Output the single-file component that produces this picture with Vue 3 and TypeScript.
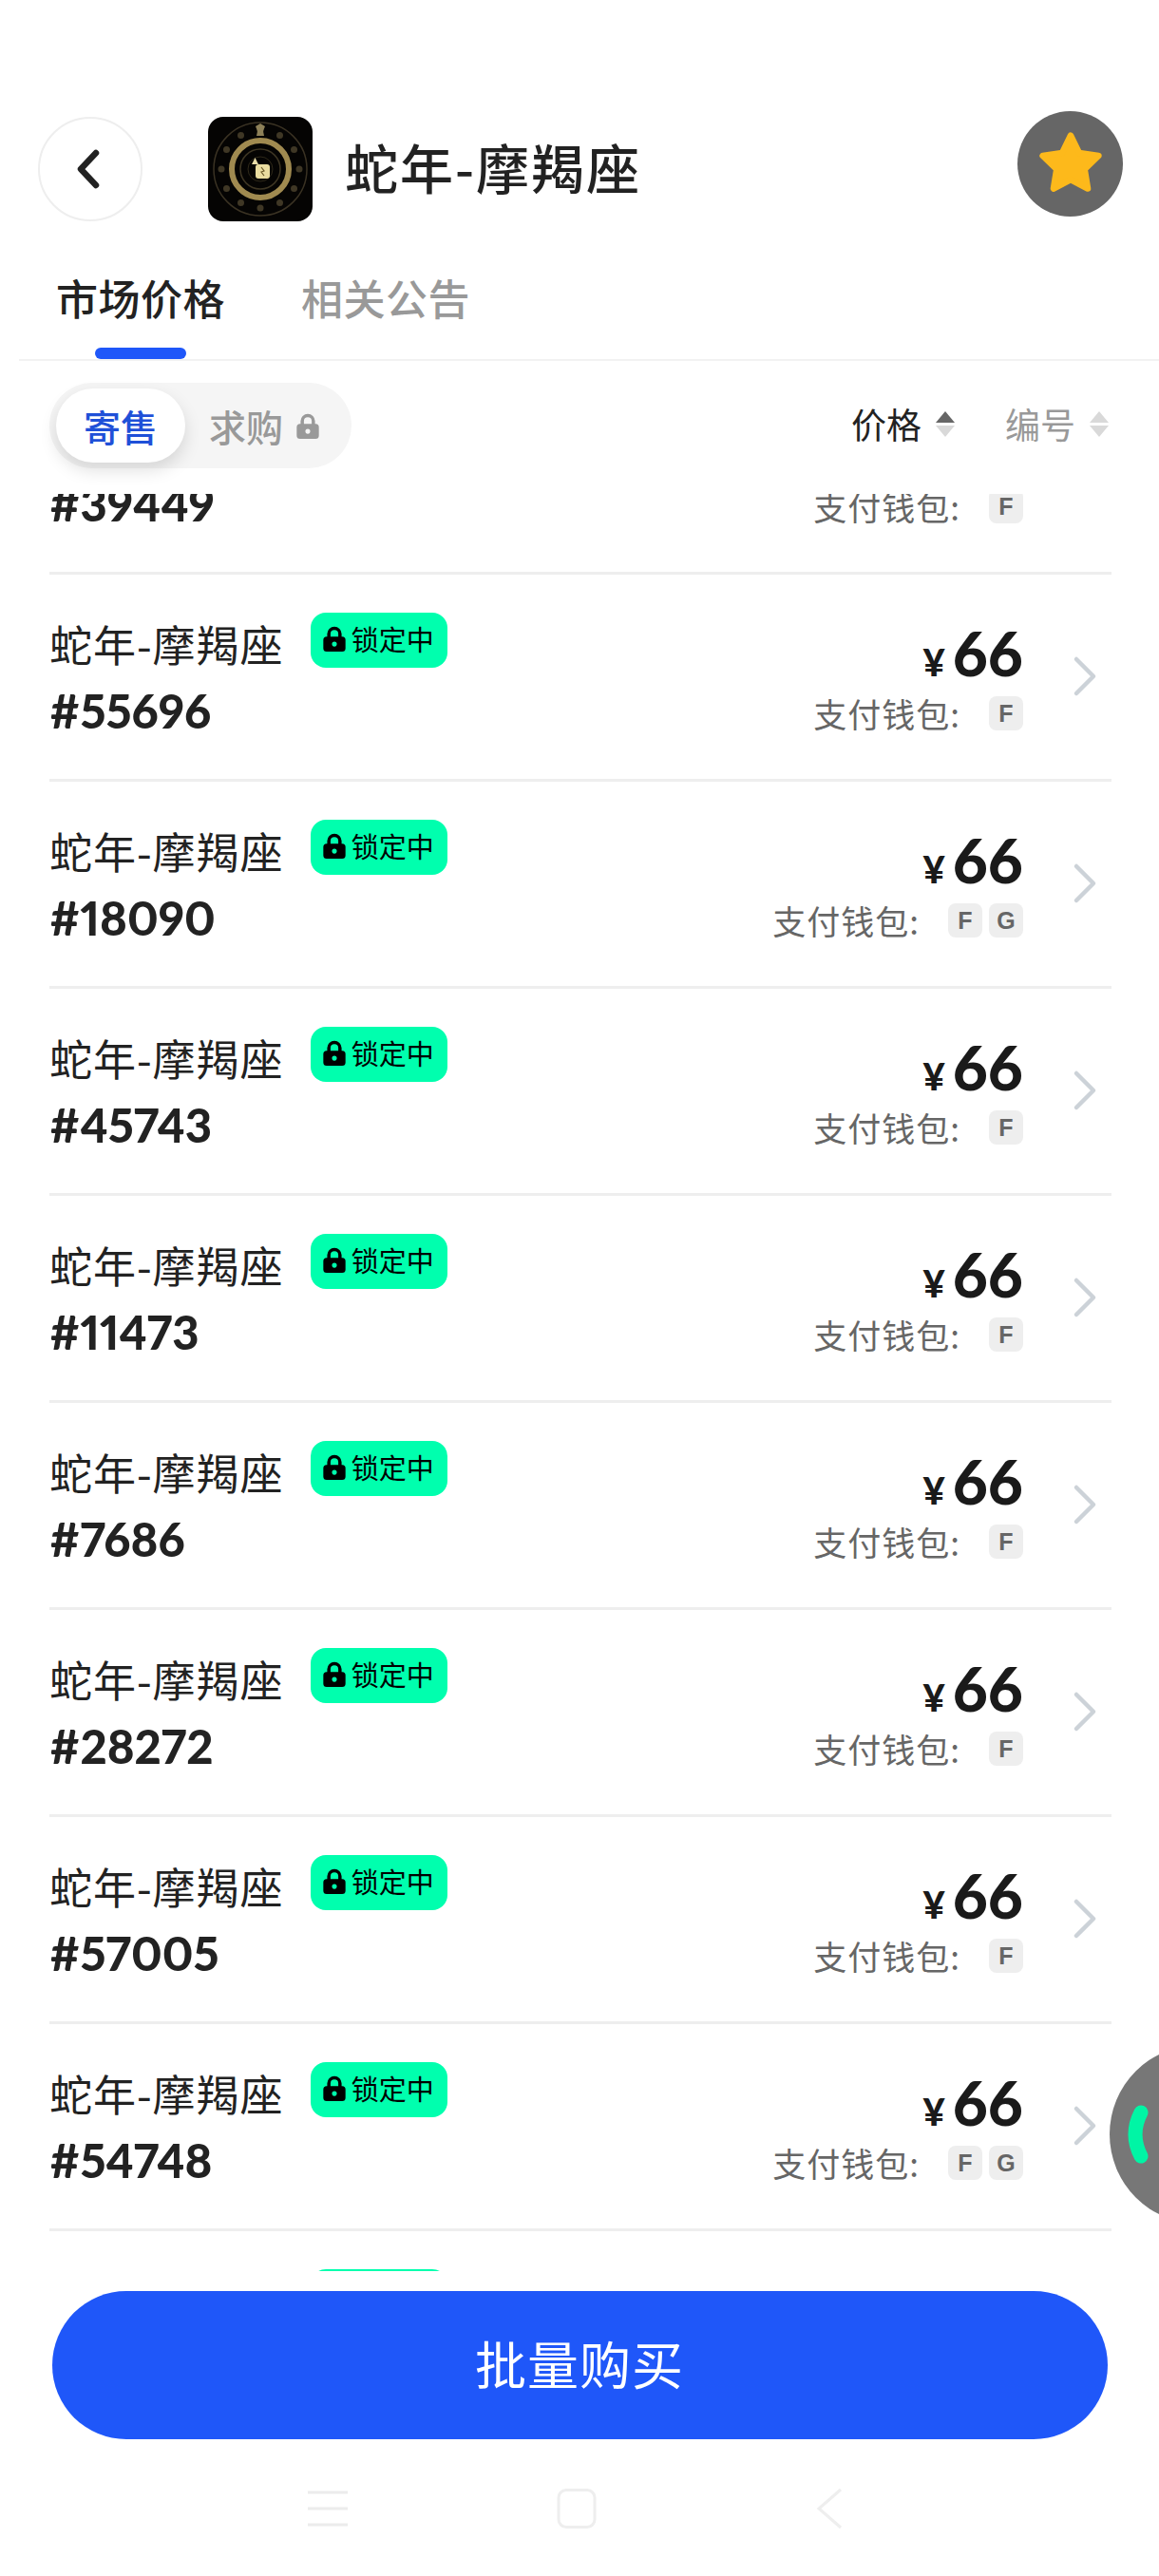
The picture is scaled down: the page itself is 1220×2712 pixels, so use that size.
<script setup lang="ts">
interface Item {
  no: string
  wallets: string[]
  locked: boolean
}

const items: Item[] = [
  { no: '39449', wallets: ['F'], locked: false },
  { no: '55696', wallets: ['F'], locked: true },
  { no: '18090', wallets: ['F', 'G'], locked: true },
  { no: '45743', wallets: ['F'], locked: true },
  { no: '11473', wallets: ['F'], locked: true },
  { no: '7686', wallets: ['F'], locked: true },
  { no: '28272', wallets: ['F'], locked: true },
  { no: '57005', wallets: ['F'], locked: true },
  { no: '54748', wallets: ['F', 'G'], locked: true },
  { no: '30126', wallets: ['F'], locked: true }
]

// 封面外圈的小符号
const marks = Array.from({ length: 12 }, (_, i) => {
  const a = (i * Math.PI) / 6
  return { x: 55 + Math.sin(a) * 41, y: 55 - Math.cos(a) * 41 }
})

const lockPath =
  'M12 1.5a6.5 6.5 0 0 0-6.5 6.5v2.5H5a3 3 0 0 0-3 3V21a3 3 0 0 0 3 3h14a3 3 0 0 0 3-3v-7.500a3 3 0 0 0-3-3h-.5V8A6.500 6.500 0 0 0 12 1.500Zm-3.500 9V8a3.500 3.500 0 0 1 7 0v2.500h-7ZM12 15a2.200 2.200 0 1 1 0 4.400A2.200 2.200 0 0 1 12 15Z'
</script>

<template>
  <div class="page">
    <!-- 顶部 -->
    <header class="header">
      <div class="back">
        <svg class="back-icon" width="30" height="46" viewBox="0 0 30 46">
          <path d="M23 6 7 23l16 17" fill="none" stroke="#222" stroke-width="6.500" stroke-linecap="round" stroke-linejoin="round" />
        </svg>
      </div>
      <svg class="cover" width="110" height="110" viewBox="0 0 110 110">
        <rect width="110" height="110" rx="16" fill="#050403" />
        <circle cx="55" cy="55" r="49" fill="none" stroke="#3a3223" stroke-width="1.500" />
        <circle cx="55" cy="55" r="30" fill="none" stroke="#a08a50" stroke-width="6" />
        <circle cx="55" cy="55" r="21" fill="none" stroke="#3d3523" stroke-width="1.500" />
        <circle cx="55" cy="55" r="13" fill="none" stroke="#2e2819" stroke-width="1" />
        <circle v-for="(m, i) in marks" :key="i" :cx="m.x" :cy="m.y" r="3.500" fill="#3f3725" />
        <path d="M55 7l5 3-2 5 1 5h-8l1-5-2-5z" fill="#8d8058" />
        <path d="M46 50l3.500-7 3.500 7z" fill="#e8dca8" />
        <rect x="50" y="50" width="15" height="15" rx="3" fill="#e9dca0" />
        <path d="M56 53l3 4-3 1 3 4" fill="none" stroke="#6b5a2a" stroke-width="1.200" />
      </svg>
      <h1 class="title">蛇年-摩羯座</h1>
      <div class="fav">
        <svg width="74" height="72" viewBox="-2 -1 78 76">
          <path d="M37 6 46.500 25.500 68 28.500 52.500 43.500 56 65 37 55 18 65 21.500 43.500 6 28.500 27.500 25.500Z" fill="#fdb91b" stroke="#fdb91b" stroke-width="7" stroke-linejoin="round" />
        </svg>
      </div>
    </header>

    <!-- 标签 -->
    <nav class="tabs">
      <div class="tab active">市场价格</div>
      <div class="tab">相关公告</div>
    </nav>

    <!-- 筛选 -->
    <div class="toolbar">
      <div class="segment">
        <span class="seg-item on">寄售</span>
        <span class="seg-item">
          求购
          <svg width="28" height="28" viewBox="0 0 24 24"><path :d="lockPath" fill="#999" fill-rule="evenodd" /></svg>
        </span>
      </div>
      <div class="sorts">
        <span class="sort current">
          价格
          <span class="carets"><i class="up dark"></i><i class="down"></i></span>
        </span>
        <span class="sort">
          编号
          <span class="carets"><i class="up"></i><i class="down"></i></span>
        </span>
      </div>
    </div>

    <!-- 列表 -->
    <div class="list-wrap">
      <ul class="list">
        <li v-for="item in items" :key="item.no" class="row">
          <div class="info">
            <div class="name-line">
              <span class="name">蛇年-摩羯座</span>
              <span v-if="item.locked" class="badge">
                <svg width="28" height="28" viewBox="0 0 24 24"><path :d="lockPath" fill="#000" fill-rule="evenodd" /></svg>
                锁定中
              </span>
            </div>
            <div class="no">#{{ item.no }}</div>
          </div>
          <div class="deal">
            <div class="price"><span class="yen">¥</span>66</div>
            <div class="pay">
              <span class="pay-label">支付钱包:</span>
              <span v-for="w in item.wallets" :key="w" class="wallet">{{ w }}</span>
            </div>
          </div>
          <svg class="arrow" width="26" height="44" viewBox="0 0 26 44">
            <path d="M4 4l18 18L4 40" fill="none" stroke="#ccd2d8" stroke-width="4.500" stroke-linecap="round" stroke-linejoin="round" />
          </svg>
        </li>
      </ul>
    </div>

    <!-- 底部 -->
    <footer class="footer">
      <button class="buy">批量购买</button>
      <div class="sys-nav">
        <svg width="42" height="40" viewBox="0 0 42 40">
          <path d="M0 3h42M0 20h42M0 37h42" stroke="#ececec" stroke-width="3" />
        </svg>
        <svg class="nav-home" width="46" height="44" viewBox="0 0 46 44">
          <rect x="4" y="2.500" width="38" height="39" rx="8" fill="none" stroke="#eee" stroke-width="3" />
        </svg>
        <svg class="nav-back" width="30" height="44" viewBox="0 0 30 44">
          <path d="M27 2 4 22l23 20" fill="none" stroke="#eee" stroke-width="3" />
        </svg>
      </div>
    </footer>

    <!-- 悬浮球 -->
    <div class="float-ball">
      <svg width="30" height="64" viewBox="0 0 30 64">
        <path d="M21 9Q9 32 21 55" fill="none" stroke="#00f5a5" stroke-width="15" stroke-linecap="round" />
      </svg>
    </div>
  </div>
</template>

<style scoped>
.page {
  position: relative;
  width: 1220px;
  height: 2712px;
  overflow: hidden;
  background: #fff;
  color: #222;
  font-family: "Noto Sans CJK SC", "Noto Sans", sans-serif;
}

.header {
  display: flex;
  align-items: center;
  height: 110px;
  margin-top: 123px;
  padding: 0 38px 0 40px;
}

.back {
  display: flex;
  align-items: center;
  justify-content: center;
  width: 110px;
  height: 110px;
  box-sizing: border-box;
  border: 2px solid #eee;
  border-radius: 50%;
}

.back-icon {
  margin-right: 4px;
}

.cover {
  margin-left: 69px;
}

.title {
  flex: 1;
  margin: 0 0 7px 34px;
  font-size: 56px;
  font-weight: 500;
  line-height: 103px;
  color: #222;
  letter-spacing: 2px;
}

.fav {
  display: flex;
  align-items: center;
  justify-content: center;
  width: 111px;
  height: 111px;
  margin-top: -12px;
  border-radius: 50%;
  background: #666;
}

.tabs {
  display: flex;
  gap: 80px;
  height: 147px;
  margin-left: 20px;
  padding-left: 39px;
  box-sizing: border-box;
  border-bottom: 2px solid #f2f2f2;
}

.tab {
  position: relative;
  margin-top: 50px;
  height: 95px;
  font-size: 44px;
  font-weight: 500;
  line-height: 60px;
  letter-spacing: 0.5px;
  color: #999;
}

.tab.active {
  color: #222;
}

.tab.active::after {
  content: "";
  position: absolute;
  left: 41px;
  bottom: 0;
  width: 96px;
  height: 12px;
  border-radius: 6px;
  background: #1f57f9;
}

.toolbar {
  position: relative;
  z-index: 1;
  display: flex;
  align-items: flex-start;
  justify-content: space-between;
  height: 140px;
  padding: 23px 53px 0 52px;
  box-sizing: border-box;
}

.segment {
  display: flex;
  align-items: center;
  width: 318px;
  height: 90px;
  box-sizing: border-box;
  padding: 0 7px;
  border-radius: 45px;
  background: #f5f5f5;
}

.seg-item {
  display: flex;
  align-items: center;
  gap: 12px;
  font-size: 39px;
  color: #999;
  font-weight: 500;
  margin-left: 25px;
}

.seg-item.on {
  justify-content: center;
  width: 136px;
  height: 78px;
  margin-left: 0;
  border-radius: 39px;
  background: #fff;
  color: #1f50d8;
  box-shadow: 0 8px 18px rgba(0, 0, 0, 0.13);
}

.sorts {
  display: flex;
  gap: 53px;
  height: 86px;
  align-items: center;
}

.sort {
  display: flex;
  align-items: center;
  gap: 15px;
  font-size: 37px;
  color: #999;
}

.sort.current {
  color: #222;
}

.carets {
  display: flex;
  flex-direction: column;
  gap: 3px;
}

.carets i {
  display: block;
  width: 0;
  height: 0;
  border-left: 10px solid transparent;
  border-right: 10px solid transparent;
}

.carets .up {
  border-bottom: 12px solid #d9d9d9;
}

.carets .up.dark {
  border-bottom-color: #666;
}

.carets .down {
  border-top: 12px solid #d9d9d9;
}

.list-wrap {
  height: 1871px;
  overflow: hidden;
}

.list {
  margin: -133px 0 0 52px;
  padding: 0;
  width: 1118px;
  list-style: none;
}

.row {
  display: flex;
  align-items: flex-start;
  height: 218px;
  box-sizing: border-box;
  border-bottom: 3px solid #eee;
}

.info {
  flex: 1;
  padding-top: 40px;
}

.name-line {
  display: flex;
  align-items: flex-start;
  height: 66px;
}

.name {
  margin-top: 2px;
  font-size: 45px;
  line-height: 62px;
  color: #222;
  letter-spacing: 1px;
}

.badge {
  display: flex;
  align-items: center;
  gap: 4px;
  width: 144px;
  height: 58px;
  box-sizing: border-box;
  margin-left: 28px;
  padding: 0 0 4px 11px;
  border-radius: 16px;
  background: #00ffae;
  color: #000;
  font-size: 29px;
  white-space: nowrap;
}

.no {
  margin-top: 8px;
  font-family: Lato, "Noto Sans", sans-serif;
  font-size: 49px;
  font-weight: 900;
  font-variant-numeric: proportional-nums;
  line-height: 58px;
  color: #222;
}

.deal {
  display: flex;
  flex-direction: column;
  align-items: flex-end;
  padding-top: 45px;
}

.price {
  display: flex;
  align-items: baseline;
  height: 76px;
  font-family: Lato, "Noto Sans", sans-serif;
  font-size: 64px;
  font-weight: 900;
  line-height: 76px;
  color: #1a1a1a;
}

.yen {
  margin-right: 8px;
  font-size: 40px;
}

.pay {
  display: flex;
  align-items: center;
  height: 40px;
  margin-top: 5px;
}

.pay-label {
  margin-right: 23px;
  font-size: 35px;
  line-height: 40px;
  letter-spacing: 1px;
  color: #666;
}

.wallet {
  display: flex;
  align-items: center;
  justify-content: center;
  width: 36px;
  height: 36px;
  margin-left: 7px;
  border-radius: 8px;
  background: #eee;
  color: #666;
  font-family: "Liberation Sans", Arial, sans-serif;
  font-size: 25px;
  font-weight: 700;
}

.arrow {
  margin: 85px 15px 0 52px;
}

.footer {
  display: flex;
  flex-direction: column;
  align-items: center;
  padding-top: 21px;
}

.buy {
  width: 1111px;
  height: 156px;
  padding: 0 0 6px;
  border: none;
  border-radius: 78px;
  background: #1f57f9;
  color: #fff;
  font-family: inherit;
  font-size: 54px;
  font-weight: 400;
  letter-spacing: 1px;
}

.sys-nav {
  display: flex;
  align-items: center;
  align-self: stretch;
  margin-top: 51px;
  padding-left: 324px;
}

.nav-home {
  margin-left: 218px;
}

.nav-back {
  margin-left: 228px;
}

.float-ball {
  position: absolute;
  left: 1168px;
  top: 2153px;
  display: flex;
  align-items: center;
  width: 188px;
  height: 188px;
  padding-left: 12px;
  box-sizing: border-box;
  border-radius: 50%;
  background: #777;
}
</style>
